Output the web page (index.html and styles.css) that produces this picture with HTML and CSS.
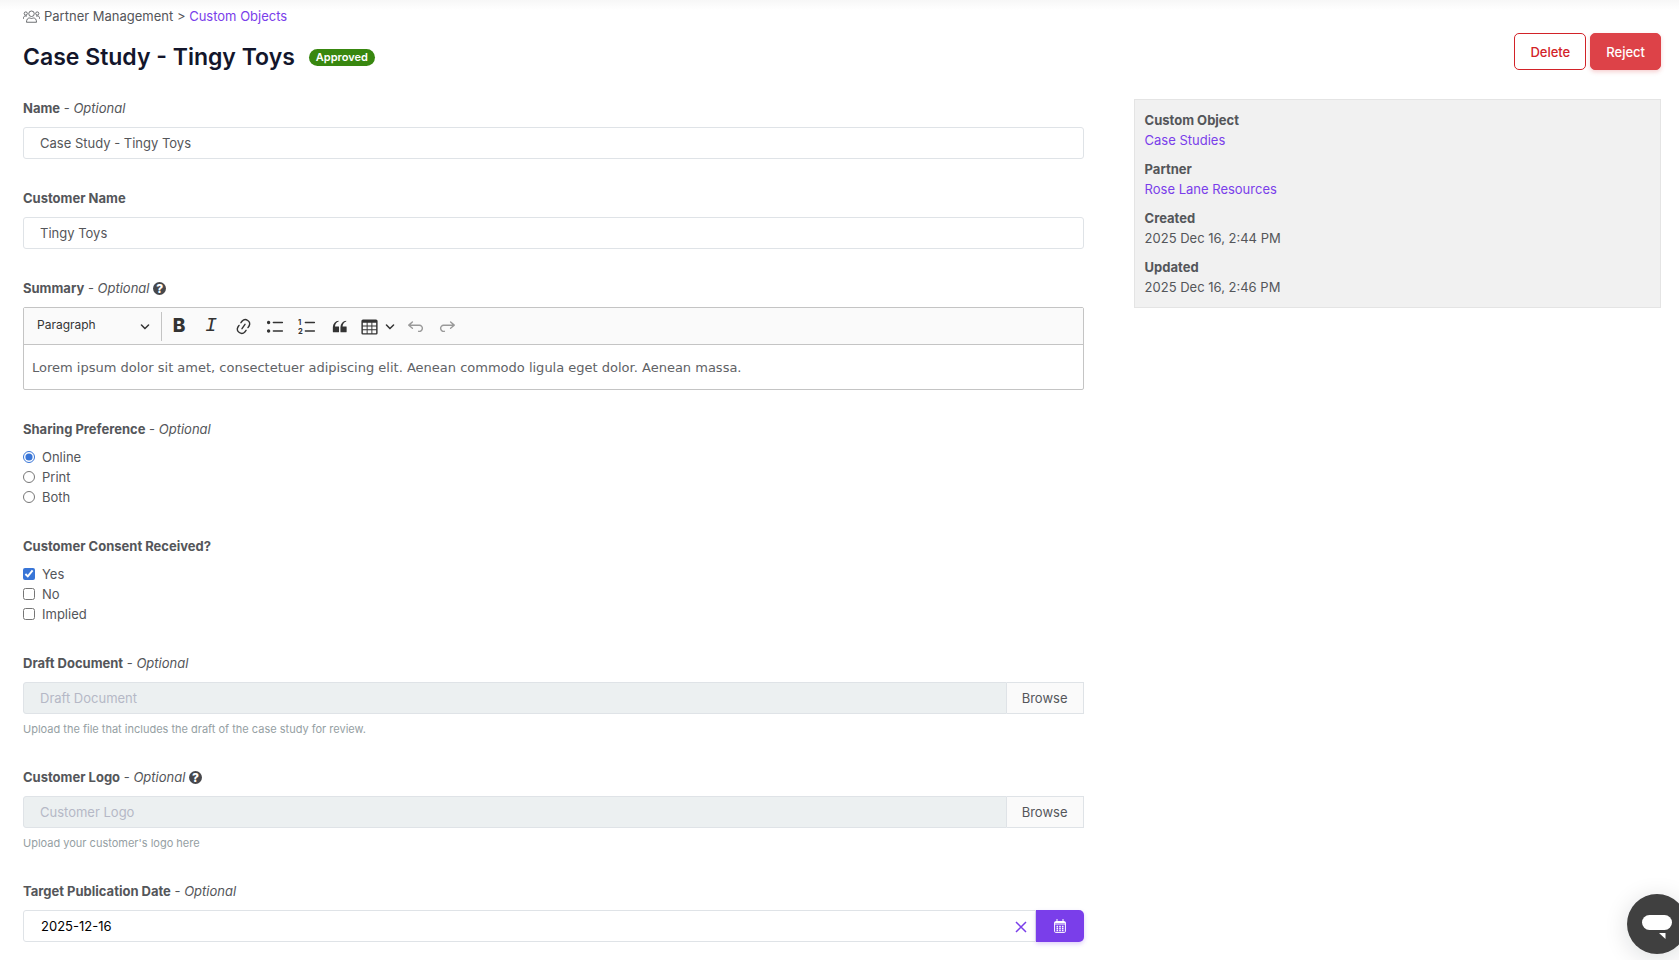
FILE: index.html
```
<!DOCTYPE html>
<html lang="en">
<head>
    <meta charset="utf-8">
    <title>Case Study - Tingy Toys</title>
    <meta name="viewport" content="width=device-width, initial-scale=1">
    <link rel="stylesheet" href="styles.css">
</head>
<body>
<div class="page">

    <!-- breadcrumb -->
    <nav class="breadcrumb">
        <svg class="icon-users" viewBox="0 0 34 26" fill="none" stroke="currentColor" stroke-width="1.7">
            <circle cx="17" cy="7.5" r="5.5"/>
            <circle cx="5.5" cy="7" r="3.2"/>
            <circle cx="28.500" cy="7" r="3.200"/>
            <path d="M7 24.500c0-6 2.500-8.500 6-8.500 1.500 0 2.500 1 4 1s2.500-1 4-1c3.500 0 6 2.500 6 8.500z"/>
            <path d="M1 17.500v-2c0-2 1.500-3.500 3.500-3.500H8M33 17.500v-2c0-2-1.500-3.500-3.500-3.500H26"/>
        </svg>
        <span>Partner Management &gt; <a href="#">Custom Objects</a></span>
    </nav>

    <!-- title + actions -->
    <header class="header">
        <div class="title">
            <h1>Case Study - Tingy Toys</h1>
            <span class="badge">Approved</span>
        </div>
        <div class="actions">
            <button type="button" class="btn btn-outline">Delete</button>
            <button type="button" class="btn btn-danger">Reject</button>
        </div>
    </header>

    <div class="columns">
        <form class="form">
            <div class="group">
                <label class="label" for="name"><b>Name</b> - <i>Optional</i></label>
                <input class="input" type="text" id="name" value="Case Study - Tingy Toys">
            </div>

            <div class="group">
                <label class="label" for="customer"><b>Customer Name</b></label>
                <input class="input" type="text" id="customer" value="Tingy Toys">
            </div>

            <div class="group">
                <div class="label" id="summary-label"><b>Summary</b> - <i>Optional</i> <span class="help-icon">?</span></div>
                <div class="editor">
                    <div class="toolbar">
                        <div class="style-select">
                            <select aria-label="Heading">
                                <option>Paragraph</option>
                            </select>
                            <svg class="caret" viewBox="0 0 10 10"><path d="M.941 4.523a.75.75 0 1 1 1.06-1.06l3.006 3.005 3.005-3.005a.75.75 0 1 1 1.060 1.060l-3.549 3.550a.75.75 0 0 1-1.168-.136L.941 4.523z"/></svg>
                        </div>
                        <span class="separator"></span>
                        <button type="button" class="tool tool-bold" aria-label="Bold">B</button>
                        <button type="button" class="tool tool-italic" aria-label="Italic">I</button>
                        <button type="button" class="tool" aria-label="Link">
                            <svg viewBox="0 0 20 20"><path d="m11.077 15 .991-1.416a.75.75 0 1 1 1.229.86l-1.148 1.64a.748.748 0 0 1-.217.206 5.251 5.251 0 0 1-8.503-5.955.741.741 0 0 1 .12-.274l1.147-1.639a.75.75 0 1 1 1.228.86L4.933 10.7l.006.003a3.75 3.75 0 0 0 6.132 4.294l.006.004zm5.494-5.335a.748.748 0 0 1-.12.274l-1.147 1.639a.75.75 0 1 1-1.228-.86l.86-1.23a3.75 3.75 0 0 0-6.144-4.301l-.86 1.229a.75.75 0 0 1-1.229-.86l1.148-1.64a.748.748 0 0 1 .217-.206 5.251 5.251 0 0 1 8.503 5.955zm-4.563-2.532a.75.75 0 0 1 .184 1.045l-3.155 4.505a.75.75 0 1 1-1.229-.86l3.155-4.506a.75.75 0 0 1 1.045-.184z"/></svg>
                        </button>
                        <button type="button" class="tool" aria-label="Bulleted list">
                            <svg viewBox="0 0 20 20"><path d="M7 5.750c0 .414.336.75.75.75h9.500a.75.75 0 1 0 0-1.500h-9.500a.75.75 0 0 0-.75.75zm-6 0C1 4.784 1.777 4 2.750 4c.966 0 1.750.777 1.750 1.750 0 .966-.777 1.750-1.750 1.750C1.784 7.500 1 6.723 1 5.750zm6 9c0 .414.336.75.75.75h9.500a.75.75 0 1 0 0-1.500h-9.500a.75.75 0 0 0-.75.75zm-6 0c0-.966.777-1.750 1.750-1.750.966 0 1.750.777 1.750 1.750 0 .966-.777 1.750-1.750 1.750-.966 0-1.750-.777-1.750-1.750z"/></svg>
                        </button>
                        <button type="button" class="tool" aria-label="Numbered list">
                            <svg viewBox="0 0 20 20"><path d="M7 5.750c0 .414.336.75.75.75h9.500a.75.75 0 1 0 0-1.500h-9.500a.75.75 0 0 0-.75.75zm0 9c0 .414.336.75.75.75h9.500a.75.75 0 1 0 0-1.500h-9.500a.75.75 0 0 0-.75.75z"/><text x="0" y="8">1</text><text x="0" y="18">2</text></svg>
                        </button>
                        <button type="button" class="tool" aria-label="Block quote">
                            <svg viewBox="0 0 20 20"><path d="M3 10.423a6.500 6.500 0 0 1 6.056-6.408l.038.67C6.448 5.423 5.354 7.663 5.220 10H9c.552 0 .5.432.5.986v4.511c0 .554-.448.503-1 .503h-5c-.552 0-.5-.449-.5-1.003v-4.574zm8 0a6.500 6.500 0 0 1 6.056-6.408l.038.67c-2.646.739-3.740 2.979-3.873 5.315H17c.552 0 .5.432.5.986v4.511c0 .554-.448.503-1 .503h-5c-.552 0-.5-.449-.5-1.003v-4.574z"/></svg>
                        </button>
                        <button type="button" class="tool tool-table" aria-label="Insert table">
                            <svg viewBox="0 0 20 20"><path d="M3 6v3h4V6H3zm0 4v3h4v-3H3zm0 4v3h4v-3H3zm5 3h4v-3H8v3zm5 0h4v-3h-4v3zm4-4v-3h-4v3h4zm0-4V6h-4v3h4zm1.500 8a1.500 1.500 0 0 1-1.500 1.500H3A1.500 1.500 0 0 1 1.500 17V4c.222-.863 1.068-1.500 2-1.500h13c.932 0 1.778.637 2 1.500v13zM12 13v-3H8v3h4zm0-4V6H8v3h4z"/></svg>
                            <svg class="caret" viewBox="0 0 10 10"><path d="M.941 4.523a.75.75 0 1 1 1.060-1.060l3.006 3.005 3.005-3.005a.75.75 0 1 1 1.060 1.060l-3.549 3.550a.75.75 0 0 1-1.168-.136L.941 4.523z"/></svg>
                        </button>
                        <button type="button" class="tool" aria-label="Undo" disabled>
                            <svg viewBox="0 0 20 20"><path d="m5.042 9.367 2.189 1.837a.75.75 0 0 1-.965 1.149l-3.788-3.180a.747.747 0 0 1-.21-.284.75.75 0 0 1 .17-.945L6.230 4.762a.75.75 0 1 1 .964 1.150L4.863 7.866h8.917A.75.75 0 0 1 14 7.900a4 4 0 1 1-1.477 7.718l.344-1.489a2.500 2.500 0 1 0 1.094-4.730l.008-.032H5.042z"/></svg>
                        </button>
                        <button type="button" class="tool" aria-label="Redo" disabled>
                            <svg viewBox="0 0 20 20"><path d="m14.958 9.367-2.189 1.837a.75.75 0 0 0 .965 1.149l3.788-3.180a.747.747 0 0 0 .21-.284.75.75 0 0 0-.17-.945L13.770 4.762a.75.75 0 1 0-.964 1.150l2.331 1.955H6.220A.75.75 0 0 0 6 7.900a4 4 0 1 0 1.477 7.718l-.344-1.489A2.500 2.500 0 1 1 6.039 9.400l-.008-.032h8.927z"/></svg>
                        </button>
                    </div>
                    <div class="editable" contenteditable="true" role="textbox" aria-labelledby="summary-label" spellcheck="false">Lorem ipsum dolor sit amet, consectetuer adipiscing elit. Aenean commodo ligula eget dolor. Aenean massa.</div>
                </div>
            </div>

            <fieldset class="group">
                <legend class="label"><b>Sharing Preference</b> - <i>Optional</i></legend>
                <label class="choice"><input type="radio" name="sharing" checked>Online</label>
                <label class="choice"><input type="radio" name="sharing">Print</label>
                <label class="choice"><input type="radio" name="sharing">Both</label>
            </fieldset>

            <fieldset class="group">
                <legend class="label"><b>Customer Consent Received?</b></legend>
                <label class="choice"><input type="checkbox" checked>Yes</label>
                <label class="choice"><input type="checkbox">No</label>
                <label class="choice"><input type="checkbox">Implied</label>
            </fieldset>

            <div class="group">
                <label class="label" for="draft"><b>Draft Document</b> - <i>Optional</i></label>
                <div class="input-row">
                    <input class="input" type="text" id="draft" placeholder="Draft Document" disabled>
                    <button type="button" class="browse">Browse</button>
                </div>
                <p class="hint">Upload the file that includes the draft of the case study for review.</p>
            </div>

            <div class="group">
                <label class="label" for="logo"><b>Customer Logo</b> - <i>Optional</i> <span class="help-icon">?</span></label>
                <div class="input-row">
                    <input class="input" type="text" id="logo" placeholder="Customer Logo" disabled>
                    <button type="button" class="browse">Browse</button>
                </div>
                <p class="hint">Upload your customer's logo here</p>
            </div>

            <div class="group">
                <label class="label" for="date"><b>Target Publication Date</b> - <i>Optional</i></label>
                <div class="input-row date-row">
                    <input class="input" type="text" id="date" value="2025-12-16">
                    <button type="button" class="clear" aria-label="Clear">
                        <svg viewBox="0 0 12 12" fill="none" stroke="currentColor" stroke-width="1.500"><path d="M1 1l10 10M11 1L1 11"/></svg>
                    </button>
                    <button type="button" class="calendar" aria-label="Pick a date">
                        <svg viewBox="0 0 12 14" fill="none" stroke="currentColor">
                            <rect x=".6" y="2.500" width="10.800" height="10.900" rx="1"/>
                            <path d="M.6 3.500h10.800M.6 5h10.800M3 0v3M9 0v3"/>
                            <path d="M2.500 7.500h7M2.500 9.500h7M2.500 11.500h7" stroke-dasharray="1.600 1.100" stroke-width="1.300"/>
                        </svg>
                    </button>
                </div>
            </div>
        </form>

        <!-- object details -->
        <aside class="details">
            <dl>
                <dt>Custom Object</dt>
                <dd><a href="#">Case Studies</a></dd>
                <dt>Partner</dt>
                <dd><a href="#">Rose Lane Resources</a></dd>
                <dt>Created</dt>
                <dd>2025 Dec 16, 2:44 PM</dd>
                <dt>Updated</dt>
                <dd>2025 Dec 16, 2:46 PM</dd>
            </dl>
        </aside>
    </div>
</div>

<button type="button" class="chat" aria-label="Chat">
    <svg viewBox="0 0 30 24" fill="#fff"><rect x="0" y="0" width="30" height="15" rx="7.500"/><path d="M17 18h6.500v6z"/></svg>
</button>
</body>
</html>
```
FILE: styles.css
```
* {
    box-sizing: border-box;
}
body {
    margin: 0;
    background: #fff;
    color: #54565a;
    font-family: Inter, "Liberation Sans", sans-serif;
    font-size: 13px;
    line-height: 20px;
}
a {
    color: #7a3eea;
    text-decoration: none;
}
b, dt {
    font-weight: 700;
}
button, input, select {
    font: inherit;
    color: inherit;
}
button {
    padding: 0;
    cursor: pointer;
}
.page {
    padding: 6px 18px 18px 23px;
    background: linear-gradient(#f7f7f7, #fff 10px) no-repeat;
}

/* breadcrumb */
.breadcrumb {
    display: flex;
    align-items: center;
    gap: 4px;
}
.icon-users {
    width: 17px;
    height: 13px;
}

/* header */
.header {
    display: flex;
    justify-content: space-between;
    align-items: flex-start;
    margin: 7px 0 26px;
}
.title {
    display: flex;
    align-items: center;
    gap: 14px;
    padding-top: 9px;
}
h1 {
    margin: 0;
    color: #13162b;
    font-size: 23px;
    line-height: 30px;
    font-weight: 600;
}
.badge {
    padding: 0 7px;
    border-radius: 9px;
    background: #38870f;
    color: #fff;
    font-size: 11px;
    line-height: 17px;
    font-weight: 600;
}
.actions {
    display: flex;
    gap: 4px;
}
.btn {
    height: 37px;
    padding: 0 15px;
    border: 1px solid #d22228;
    border-radius: 5px;
    font-weight: 500;
}
.btn-outline {
    background: #fff;
    color: #d22228;
}
.btn-danger {
    border-color: #dd4248;
    background: #dd4248;
    color: #fff;
    box-shadow: 0 2px 4px rgba(221, 66, 72, .25);
}

/* layout */
.columns {
    display: grid;
    grid-template-columns: minmax(0, 1fr) 32.2%;
    gap: 50px;
    align-items: start;
}
.group {
    margin: 0 0 29px;
    padding: 0;
    border: 0;
}
.label {
    display: block;
    margin-bottom: 9px;
    padding: 0;
}
legend.label {
    margin-bottom: 8px;
}
.help-icon {
    display: inline-block;
    width: 13px;
    height: 13px;
    border-radius: 50%;
    background: #47484c;
    color: #fff;
    font-size: 12px;
    line-height: 13px;
    font-weight: 800;
    text-align: center;
}
.input {
    display: block;
    width: 100%;
    height: 32px;
    padding: 0 16px;
    border: 1px solid #dfe3e7;
    border-radius: 3px;
    background: #fff;
}
.input:disabled {
    background: #ecf0f1;
}
.input::placeholder {
    color: #b5b8c6;
    opacity: 1;
}

/* rich text editor */
.editor {
    border: 1px solid #c4c4c4;
    border-radius: 2px;
}
.toolbar {
    display: flex;
    align-items: center;
    gap: 2px;
    height: 37px;
    border-bottom: 1px solid #c4c4c4;
    background: #fafafa;
    color: #333;
}
.toolbar svg {
    width: 19px;
    height: 19px;
    fill: currentColor;
}
.toolbar text {
    font-size: 8px;
    font-weight: 700;
}
.toolbar .caret {
    width: 10px;
    height: 10px;
}
.style-select {
    position: relative;
    width: 135px;
}
.style-select select {
    display: block;
    width: 100%;
    height: 30px;
    padding: 0 13px 2px;
    border: 0;
    background: none;
    font-size: 12px;
    appearance: none;
}
.style-select .caret {
    position: absolute;
    top: 10px;
    right: 9px;
    pointer-events: none;
}
.separator {
    width: 1px;
    height: 29px;
    background: #c4c4c4;
}
.tool {
    display: flex;
    align-items: center;
    justify-content: center;
    width: 30px;
    height: 30px;
    border: 0;
    background: none;
}
.tool:disabled {
    color: #999;
}
.tool-bold {
    font-size: 19px;
    font-weight: 800;
}
.tool-italic {
    font-family: "Liberation Mono", monospace;
    font-size: 20px;
    font-style: italic;
}
.tool-table {
    gap: 6px;
    width: 42px;
}
.editable {
    padding: 13px 8px 11px;
    outline: 0;
    color: #606266;
    font-family: "DejaVu Sans", sans-serif;
    font-size: 13px;
}

/* radios and tick boxes */
.choice {
    display: flex;
    align-items: center;
    gap: 7px;
}
.choice input {
    width: 12px;
    height: 12px;
    margin: 0;
    accent-color: #3875d7;
}

/* file and date fields */
.input-row {
    display: flex;
    position: relative;
}
.input-row .input {
    flex: 1;
    border-radius: 3px 0 0 3px;
}
.browse {
    width: 77px;
    border: 1px solid #dfe3e7;
    border-left: 0;
    background: #fafafa;
}
.hint {
    margin: 6px 0 0;
    color: #95a0a3;
    font-size: 11px;
    line-height: 18px;
}
.date-row .input {
    padding: 0 64px 0 17px;
    color: #000;
}
.clear {
    position: absolute;
    top: 11px;
    right: 57px;
    width: 12px;
    height: 12px;
    border: 0;
    background: none;
    color: #7a3eea;
}
.clear svg {
    display: block;
}
.calendar {
    display: flex;
    align-items: center;
    justify-content: center;
    width: 48px;
    border: 0;
    border-radius: 0 5px 5px 0;
    background: #7a3eea;
    color: #fff;
    box-shadow: 0 2px 4px rgba(122, 62, 234, .25);
}
.calendar svg {
    width: 12px;
    height: 14px;
}

/* side panel */
.details {
    margin-top: 1px;
    padding: 10px;
    border: 1px solid #e4e4e4;
    background: #f1f1f1;
}
dl, dd {
    margin: 0;
}
dd + dt {
    margin-top: 9px;
}

.chat {
    position: fixed;
    right: -8px;
    bottom: 6px;
    width: 60px;
    height: 60px;
    border: 0;
    border-radius: 50%;
    background: #404040;
    box-shadow: 0 4px 24px rgba(0, 20, 30, .14);
}
.chat svg {
    display: block;
    width: 30px;
    height: 24px;
    margin: 6px auto 0;
}
```
